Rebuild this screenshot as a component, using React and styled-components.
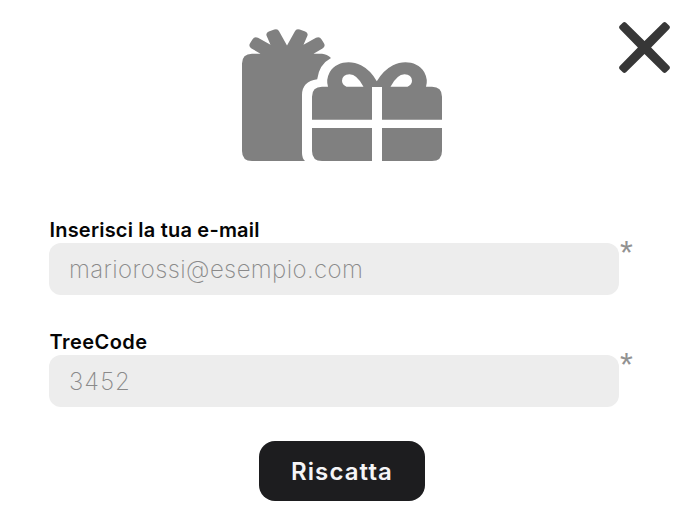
import React from "react";
import styled, { createGlobalStyle } from "styled-components";

const GlobalStyle = createGlobalStyle`
  *, *::before, *::after { box-sizing: border-box; }
  body { margin: 0; background: #fff; }
`;

const Dialog = styled.main`
  position: relative;
  width: 684px;
  height: 520px;
  padding: 28px 0 0 49px;
  background: #fff;
  overflow: hidden;
  font-family: Inter, "Liberation Sans", sans-serif;
`;

const CloseButton = styled.button`
  position: absolute;
  top: 22px;
  right: 14px;
  width: 51px;
  height: 51px;
  padding: 0;
  border: 0;
  background: none;
  color: #373737;
  cursor: pointer;

  svg { display: block; }
`;

const GiftIcon = styled.svg`
  display: block;
  width: 200px;
  height: 134px;
  margin-left: 193px;
  fill: #808080;
`;

const Form = styled.form`
  display: flex;
  flex-direction: column;
  margin-top: 57px;
`;

const Field = styled.div`
  display: grid;
  grid-template-columns: 570px auto;
  grid-template-rows: 24px 52px;
  margin-bottom: 36px;
`;

const Label = styled.label`
  grid-column: 1 / -1;
  justify-self: start;
  padding-left: 0.5px;
  font-size: 20px;
  line-height: 22px;
  font-weight: 600;
  white-space: nowrap;
  letter-spacing: ${({ $spacing }) => $spacing};
  color: #050505;
`;

const Input = styled.input`
  width: 570px;
  height: 52px;
  padding: 1px 20px 0 20px;
  border: 0;
  border-radius: 12px;
  outline: none;
  background: #ededed;
  color: #333;
  font: 250 24px/50px Inter, "Liberation Sans", sans-serif;
  letter-spacing: ${({ $spacing }) => $spacing};

  &::placeholder { color: #8a8a8a; opacity: 1; }
`;

const Required = styled.span`
  padding-left: 1px;
  color: #929292;
  font-family: "Liberation Sans", Arial, sans-serif;
  font-size: 33px;
  line-height: 32px;
  margin-top: -6px;
  font-weight: 400;
`;

const SubmitButton = styled.button`
  width: 166px;
  height: 60px;
  margin: -2px 0 0 210px;
  padding: 2px 0 0;
  border: 0;
  border-radius: 16px;
  background: #1d1d1f;
  color: #f5f5f7;
  font: 600 24px/1 Inter, "Liberation Sans", sans-serif;
  letter-spacing: 1.1px;
  cursor: pointer;
`;

function Gifts() {
  return (
    <GiftIcon viewBox="242 28 200 134" aria-hidden="true">
      <path d="M242 63.5Q242 54 252 53.7H260.5L251.5 48.5Q248 46.2 250.2 43L252.4 39.4Q254.5 36.2 258 37.8L270.5 44.8L266.7 36Q265.4 32.8 268.8 31.5L274.3 29.5Q277.8 28.3 279.2 31.5L287 45.6L294.8 31.5Q296.2 28.3 299.7 29.5L305.2 31.5Q308.6 32.8 307.3 36L303.5 44.8L316 37.8Q319.5 36.2 321.6 39.4L323.8 43Q326 46.2 322.5 48.5L313.5 53.7H322Q327 54 331 58Q319 64.5 317.2 79.3Q302 81.5 302 95V153Q302 158 305 161H252Q242 161 242 151Z" />
      <path fillRule="evenodd" d="M322 86.7H328Q325.8 79.5 329.7 72.2C336 61.5 350.5 59.8 361 65.2Q370.5 70 376.8 81.2Q383.5 70 393 65.2C403.5 59.8 418 61.5 424.3 72.2Q428.2 79.5 426 86.7H432Q442 86.7 442 96.7V119.7H382V87H372V119.7H312V96.7Q312 86.7 322 86.7ZM346.5 86.7H363.5Q357 74.2 349.5 74.2Q342.3 74.2 342 80.8Q342 84.8 346.5 86.7ZM390.5 86.7H407.5Q412 84.8 412 80.8Q411.7 74.2 404.5 74.2Q397 74.2 390.5 86.7Z" />
      <path d="M312 128H372V161H322Q312 161 312 151ZM382 128H442V151Q442 161 432 161H382Z" />
    </GiftIcon>
  );
}

function FormField({ id, label, placeholder, type = "text", labelSpacing, inputSpacing }) {
  return (
    <Field>
      <Label htmlFor={id} $spacing={labelSpacing}>{label}</Label>
      <Input id={id} type={type} placeholder={placeholder} $spacing={inputSpacing} required />
      <Required>*</Required>
    </Field>
  );
}

export default function App() {
  return (
    <Dialog>
      <GlobalStyle />
      <CloseButton type="button" aria-label="Chiudi">
        <svg width="51" height="51" viewBox="0 0 51 51" fill="currentColor">
          <path d="M3.8.7Q5.4-.6 7 .8L25.5 18.9L44 .8Q45.6-.6 47.2.7L50.3 3.8Q51.6 5.4 50.2 7L32.1 25.5L50.2 44Q51.6 45.6 50.3 47.2L47.2 50.3Q45.6 51.6 44 50.2L25.5 32.1L7 50.2Q5.4 51.6 3.8 50.3L.7 47.2Q-.6 45.6.8 44L18.9 25.5L.8 7Q-.6 5.4.7 3.8Z" />
        </svg>
      </CloseButton>
      <Gifts />
      <Form>
        <FormField id="email" type="email" label="Inserisci la tua e-mail" placeholder="mariorossi@esempio.com" labelSpacing="0.2px" inputSpacing="0.4px" />
        <FormField id="code" label="TreeCode" placeholder="3452" labelSpacing="0.45px" inputSpacing="1.1px" />
        <SubmitButton type="button">Riscatta</SubmitButton>
      </Form>
    </Dialog>
  );
}
